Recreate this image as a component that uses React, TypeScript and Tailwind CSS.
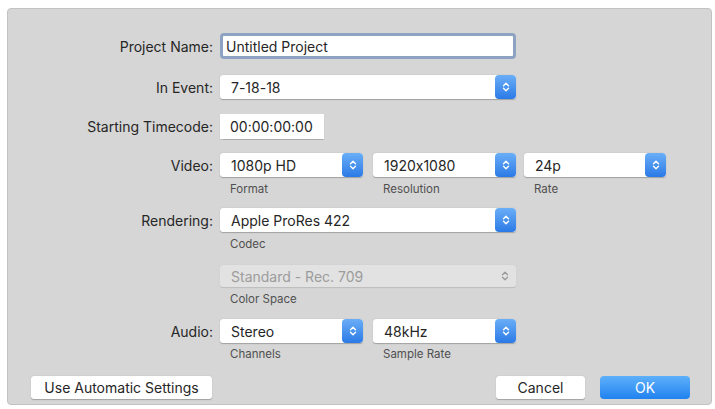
import { ReactNode } from "react"

function Chevrons({ color = "white" }: { color?: string }) {
  return (
    <svg width="8" height="12" viewBox="0 0 8 12" fill="none">
      <path d="M1.5 4.8 L4 2.3 L6.5 4.8" stroke={color} strokeWidth="1.4" strokeLinecap="round" strokeLinejoin="round" />
      <path d="M1.5 7.2 L4 9.7 L6.5 7.2" stroke={color} strokeWidth="1.4" strokeLinecap="round" strokeLinejoin="round" />
    </svg>
  )
}

function Select({ value, width }: { value: string; width: string }) {
  return (
    <div className={`${width} h-[24px] flex bg-white rounded-[3px] shadow-[0_0.5px_1px_rgba(0,0,0,0.25)]`}>
      <div className="flex-1 pl-[11px] flex items-center text-[14px] text-[#262626]">{value}</div>
      <div className="w-[21px] h-full rounded-[4px] bg-gradient-to-b from-[#6aaef7] to-[#2a7ae6] flex items-center justify-center">
        <Chevrons />
      </div>
    </div>
  )
}

function Row({ label, children, className = "" }: { label: string; children: ReactNode; className?: string }) {
  return (
    <div className={`flex items-center ${className}`}>
      <div className="w-[205px] text-right text-[14px] text-[#262626]">{label}</div>
      <div className="ml-[7px] flex items-center">{children}</div>
    </div>
  )
}

function Sub({ children }: { children: ReactNode }) {
  return <div className="text-[11.5px] text-[#505050] pl-[10px]">{children}</div>
}

export default function App() {
  return (
    <div
      className="w-[715px] h-[409px] bg-white pt-[8px] pl-[7px] pr-[3px] pb-[4px] [font-feature-settings:'calt'_0]"
      style={{ fontFamily: "Inter, 'Liberation Sans', sans-serif" }}
    >
      <div className="h-full bg-[#d6d6d6] border border-[#c2c2c2] rounded-[4px] flex flex-col">
        <Row label="Project Name:" className="mt-[24px]">
          <div className="w-[296px] h-[26px] bg-white border-[3px] border-[#8ea2c2] rounded-[4px] flex items-center pl-[3px] text-[14px] text-[#262626]">
            Untitled Project
          </div>
        </Row>
        <Row label="In Event:" className="mt-[16px]">
          <Select value="7-18-18" width="w-[296px]" />
        </Row>
        <Row label="Starting Timecode:" className="mt-[15px]">
          <div className="w-[104px] h-[25px] bg-white flex items-center pl-[10px] text-[14px] text-[#262626] shadow-[0_0.5px_1px_rgba(0,0,0,0.2)]">
            00:00:00:00
          </div>
        </Row>

        <Row label="Video:" className="mt-[14px]">
          <div className="flex gap-[10px]">
            <Select value="1080p HD" width="w-[143px]" />
            <Select value="1920x1080" width="w-[143px]" />
            <div className="ml-[-2px]">
              <Select value="24p" width="w-[142px]" />
            </div>
          </div>
        </Row>
        <div className="flex ml-[212px] mt-[7px] h-[12px] items-center">
          <div className="w-[153px]"><Sub>Format</Sub></div>
          <div className="w-[151px]"><Sub>Resolution</Sub></div>
          <Sub>Rate</Sub>
        </div>

        <Row label="Rendering:" className="mt-[12px]">
          <Select value="Apple ProRes 422" width="w-[296px]" />
        </Row>
        <div className="ml-[212px] mt-[7px] h-[12px] flex items-center">
          <Sub>Codec</Sub>
        </div>

        <div className="ml-[212px] mt-[14px]">
          <div className="w-[296px] h-[22px] bg-[#e2e2e2] rounded-[3px] flex items-center pl-[11px] pr-[7px] text-[14px] text-[#9c9c9c] shadow-[0_0.5px_1px_rgba(0,0,0,0.12)]">
            <div className="flex-1">Standard - Rec. 709</div>
            <Chevrons color="#9a9a9a" />
          </div>
        </div>
        <div className="ml-[212px] mt-[7px] h-[12px] flex items-center">
          <Sub>Color Space</Sub>
        </div>

        <Row label="Audio:" className="mt-[13px]">
          <div className="flex gap-[10px]">
            <Select value="Stereo" width="w-[143px]" />
            <Select value="48kHz" width="w-[143px]" />
          </div>
        </Row>
        <div className="flex ml-[212px] mt-[6px] h-[12px] items-center">
          <div className="w-[153px]"><Sub>Channels</Sub></div>
          <Sub>Sample Rate</Sub>
        </div>

        <div className="flex items-center mt-[15px] pl-[23px] pr-[21px]">
          <div className="w-[181px] h-[23px] bg-white rounded-[3px] flex items-center justify-center text-[14px] text-[#262626] shadow-[0_0.5px_1px_rgba(0,0,0,0.25)]">
            Use Automatic Settings
          </div>
          <div className="flex-1" />
          <div className="w-[89px] h-[23px] bg-white rounded-[3px] flex items-center justify-center text-[14px] text-[#262626] shadow-[0_0.5px_1px_rgba(0,0,0,0.25)]">
            Cancel
          </div>
          <div className="w-[90px] h-[23px] ml-[15px] rounded-[4px] bg-gradient-to-b from-[#5db0fa] to-[#1f82ef] flex items-center justify-center text-[14px] text-white">
            OK
          </div>
        </div>
      </div>
    </div>
  )
}
